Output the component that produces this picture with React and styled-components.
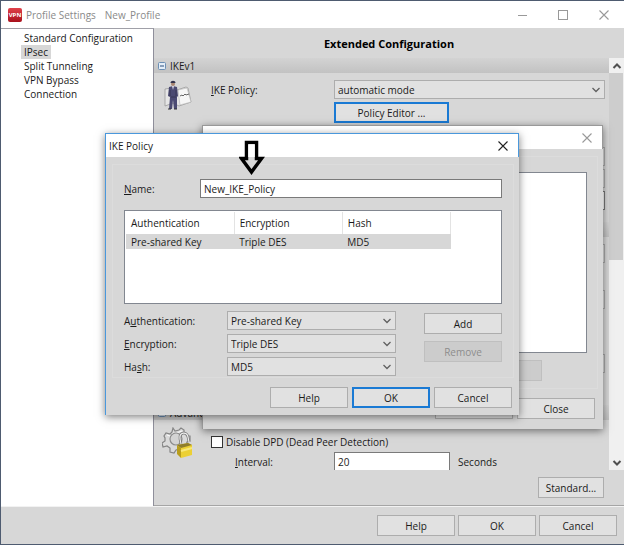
import React, { useState } from 'react'
import styled, { createGlobalStyle } from 'styled-components'

const GlobalStyle = createGlobalStyle`
  * {
    box-sizing: border-box;
  }
  body {
    margin: 0;
    background: #d7d7d7;
    color: #1a1a1a;
  }
  body, button, input, select {
    font-family: 'Open Sans', 'Noto Sans', sans-serif;
    font-size: 10px;
    font-weight: 500;
    line-height: 14px;
  }
`

const Window = styled.div`
  position: relative;
  display: flex;
  flex-direction: column;
  min-height: 100vh;
  border: 1px solid #4e5b70;
  border-right: 0;
  overflow: hidden;
`

const TitleBar = styled.header`
  display: flex;
  align-items: center;
  height: 27px;
  padding-left: 7px;
  background: #fff;
  color: #8a8a8a;
  font-weight: 400;
`

const Logo = styled.span`
  width: 14px;
  height: 14px;
  margin-right: 4px;
  border-radius: 2px;
  background: linear-gradient(#e0414a, #a8101c);
  color: #fff;
  font-size: 6px;
  font-weight: 700;
  text-align: center;
`

const ProfileName = styled.span`
  flex: 1;
  margin-left: 9px;
`

const WindowButton = styled.button`
  display: flex;
  align-items: center;
  justify-content: center;
  width: ${(p) => p.$width || 41}px;
  height: 23px;
  padding: 0;
  border: 0;
  background: none;
  color: ${(p) => p.$color || '#999'};
`

const Body = styled.div`
  display: flex;
  flex: 1;
`

const Nav = styled.nav`
  width: 153px;
  padding: 2px 0 0 20px;
  border-top: 1px solid #a0a0a8;
  border-right: 1px solid #8f8f9b;
  background: #fff;
`

const NavItem = styled.button`
  display: block;
  height: 14px;
  padding: 0 3px;
  border: 0;
  background: ${(p) => (p.$active ? '#d7d7d7' : 'none')};
  color: inherit;
`

const Main = styled.main`
  display: flex;
  flex: 1;
  flex-direction: column;
  border-bottom: 1px solid #a5a5a5;
`

const Heading = styled.h1`
  height: 30px;
  margin: 0;
  font-size: 11px;
  font-weight: 700;
  line-height: 32px;
  text-align: center;
  color: #000;
`

const ScrollArea = styled.div`
  display: flex;
  flex: 1 1 0;
  min-height: 0;
  overflow: hidden;
`

const Sections = styled.div`
  flex: 1;
  height: 412px;
  overflow: hidden;
`

const SectionHeader = styled.h2`
  display: flex;
  align-items: center;
  gap: 4px;
  height: 15px;
  margin: 0;
  padding-left: 4px;
  background: linear-gradient(#d3d3d3, #c2c2c2);
  font-size: 10px;
  font-weight: 500;
`

const SectionBody = styled.div`
  display: flex;
  padding: 7px 4px ${(p) => p.$bottom || 0}px 8px;
`

const IconColumn = styled.div`
  width: 49px;
`

const Fields = styled.div`
  display: flex;
  flex: 1;
  flex-direction: column;
  gap: 3px;
`

const FieldRow = styled.div`
  display: flex;
  align-items: center;
  margin-top: ${(p) => p.$space || 0}px;
`

const FieldLabel = styled.label`
  width: ${(p) => p.$width || 123}px;
  padding-left: ${(p) => p.$indent || 0}px;
`

const SelectBox = styled.div`
  display: grid;
  flex: 1;
  align-items: center;

  select,
  svg {
    grid-area: 1 / 1;
  }
  svg {
    justify-self: end;
    margin-right: 4px;
    pointer-events: none;
  }
`

const StyledSelect = styled.select`
  width: 100%;
  height: 19px;
  padding: 0 20px 0 3px;
  border: 1px solid #adadad;
  border-radius: 0;
  background: #e1e1e1;
  color: inherit;
  appearance: none;
`

const TextInput = styled.input`
  flex: ${(p) => (p.$width ? 'none' : 1)};
  width: ${(p) => (p.$width ? `${p.$width}px` : 'auto')};
  min-width: 0;
  height: 19px;
  padding: 0 3px;
  border: 1px solid #7a7a7a;
  background: #fff;
  color: inherit;
`

const Button = styled.button`
  width: ${(p) => p.$width || 78}px;
  height: 21px;
  padding: 0;
  border: ${(p) => (p.$primary ? '2px solid #1a7ad4' : '1px solid #adadad')};
  background: #e1e1e1;
  color: inherit;

  &:disabled {
    border-color: #bfbfbf;
    background: #cccccc;
    color: #8c8c8c;
  }
`

const CheckLabel = styled.label`
  display: flex;
  align-items: center;
  gap: 3px;
  height: 14px;
  margin-top: 8px;
`

const CheckBox = styled.input`
  width: 12px;
  height: 12px;
  margin: 0;
  border: 1px solid #333;
  background: #fff;
  appearance: none;

  &:checked {
    background: #1a7ad4;
  }
`

const Unit = styled.span`
  margin-left: 8px;
`

const ScrollBar = styled.div`
  display: flex;
  flex-direction: column;
  width: 15px;
  background: #f0f0f0;
`

const ScrollButton = styled.button`
  display: flex;
  align-items: center;
  justify-content: center;
  height: 15px;
  padding: 0;
  border: 0;
  background: none;
  color: #505050;
`

const ScrollTrack = styled.div`
  flex: 1;
`

const ScrollThumb = styled.div`
  height: 49%;
  margin-right: 1px;
  background: #cdcdcd;
`

const StandardRow = styled.div`
  display: flex;
  justify-content: flex-end;
  padding: 7px 20px 7px 0;
`

const Footer = styled.footer`
  display: flex;
  justify-content: flex-end;
  gap: 3px;
  padding: 8px 7px 8px 0;
  border-top: 1px solid #f2f2f2;
`

const Dialog = styled.section`
  position: absolute;
  top: ${(p) => p.$top}px;
  left: ${(p) => p.$left}px;
  display: flex;
  flex-direction: column;
  width: ${(p) => p.$width}px;
  background: #d7d7d7;
  border-left: 1px solid ${(p) => p.$accent};
  box-shadow: 0 2px 8px rgba(0, 0, 0, 0.5);
`

const DialogTitle = styled.header`
  display: flex;
  align-items: center;
  justify-content: space-between;
  height: 24px;
  padding-left: 3px;
  border: solid ${(p) => p.$accent};
  border-width: 1px 1px 0 0;
  background: #fff;
  color: ${(p) => p.$color};
  font-weight: 400;
`

const DialogGroup = styled.div`
  display: flex;
  flex-direction: column;
  margin: 7px 5px 0 6px;
  padding: ${(p) => p.$padding};
  border: 1px solid #dcdcdc;
`

const DialogFooter = styled.footer`
  display: flex;
  justify-content: flex-end;
  gap: 4px;
  padding: 9px ${(p) => p.$right}px ${(p) => p.$bottom}px 0;
`

const ListPanel = styled.div`
  height: ${(p) => p.$height}px;
  margin-bottom: 7px;
  padding: 1px;
  border: 1px solid #828790;
  background: #fff;
`

const PolicyTable = styled.table`
  width: 325px;
  border-collapse: collapse;
  table-layout: fixed;

  th,
  td {
    padding: 0 0 0 5px;
    font-weight: 500;
    text-align: left;
  }
  th {
    height: 22px;
    border-right: 1px solid #e3e3e3;
  }
  td {
    height: 15px;
    background: #d7d7d7;
  }
`

const DialogFields = styled.div`
  display: flex;
  justify-content: space-between;
`

const DialogSelects = styled.div`
  display: flex;
  flex-direction: column;
  gap: 4px;
  width: 272px;
`

const DialogActions = styled.div`
  display: flex;
  flex-direction: column;
  gap: 7px;
  padding-top: 2px;
`

const Arrow = styled.svg`
  position: absolute;
  top: 139px;
  left: 238px;
`

const Chevron = ({ up, bold }) => (
  <svg width="10" height="6" viewBox="0 0 10 6" fill="none">
    <path
      d={up ? 'M1.5 5 5 1.5 8.5 5' : 'M1.5 1 5 4.500 8.500 1'}
      stroke={bold ? '#505050' : '#606060'}
      strokeWidth={bold ? 2 : 1.3}
    />
  </svg>
)

const CloseIcon = () => (
  <svg width="10" height="10" viewBox="0 0 10 10">
    <path d="M.5.5l9 9M9.5.5l-9 9" stroke="currentColor" strokeWidth="1.1" />
  </svg>
)

const CollapseIcon = () => (
  <svg width="8" height="8" viewBox="0 0 8 8">
    <rect x=".5" y=".5" width="7" height="7" rx="1" fill="#e4eef8" stroke="#6c8fb4" />
    <path d="M2 4h4" stroke="#2c4f7c" />
  </svg>
)

const PolicyIcon = () => (
  <svg width="32" height="32" viewBox="0 0 32 32">
    <path d="M3 9l7-1 5 2 9-3 2 1 3 14-12 4-6-3-8 3z" fill="#e6e6e6" stroke="#9a9a9a" strokeWidth=".8" />
    <path d="M16 10l9-2 4 14-11 3z" fill="#f6f6f6" stroke="#b5b5b5" strokeWidth=".6" />
    <path d="M18 16l2-1 1 1 2-2 1 1 3-1" fill="none" stroke="#666" strokeWidth="1" />
    <path d="M7 7l4-1 4 1 1 9-1 1v12h-3l-1-9-1 9H7l1-12-2-1z" fill="#4b4a72" />
    <path d="M10 6l1 4 1-4z" fill="#dde" />
    <path d="M8 10v6M14 10v6M9 17h5" stroke="#33324f" strokeWidth=".8" />
    <circle cx="11" cy="4" r="2" fill="#a98672" />
    <path d="M8.500 3c0-3 5-3 5 0z" fill="#33334c" />
    <path d="M6 29h3M12 29h3" stroke="#333" strokeWidth="1.200" />
  </svg>
)

const AdvancedIcon = () => (
  <svg width="32" height="32" viewBox="0 0 32 32">
    <path
      d="M11 1l2 3 4-1 2-2 3 2v3l3 3h3v5l-3 1-1 4 1 3-4 2-3-2-4 1-2 3-4-1v-4l-3-2-4 1-1-4 3-2v-3L2 9l2-3 4 1 2-2z"
      fill="#dadada"
      stroke="#858585"
      strokeWidth="1.200"
    />
    <path d="M5 8l3 1 3-3 2 1 4-2 3-1" fill="none" stroke="#fafafa" strokeWidth="1" />
    <circle cx="14" cy="12" r="6" fill="#d4d4d4" stroke="#8d8d8d" strokeWidth="1.200" />
    <path d="M19 17l-1-5c-1-7 7-8 8-2l1 5" fill="none" stroke="#777" strokeWidth="2.600" />
    <path d="M19 17l-1-5c-1-7 7-8 8-2l1 5" fill="none" stroke="#eee" strokeWidth="1.200" />
    <path d="M15 18l4 3v10l-4-4z" fill="#b89d1c" />
    <path d="M15 18l11-2 4 2v10l-11 3v-10z" fill="#ecd034" />
    <path d="M15 18l11-2 4 2-11 3z" fill="#8f7d2c" />
    <path d="M19 24l11-3" stroke="#f8e87a" strokeWidth="2" />
  </svg>
)

const Select = ({ options, ...props }) => (
  <SelectBox>
    <StyledSelect {...props}>
      {options.map((option) => (
        <option key={option}>{option}</option>
      ))}
    </StyledSelect>
    <Chevron />
  </SelectBox>
)

const navItems = [
  'Standard Configuration',
  'IPsec',
  'Split Tunneling',
  'VPN Bypass',
  'Connection',
]

const ExtendedConfiguration = () => (
  <Main>
    <Heading>Extended Configuration</Heading>
    <ScrollArea>
      <Sections>
        <SectionHeader>
          <CollapseIcon />
          IKEv1
        </SectionHeader>
        <SectionBody $bottom={12}>
          <IconColumn>
            <PolicyIcon />
          </IconColumn>
          <Fields>
            <FieldRow>
              <FieldLabel htmlFor="ikePolicy">
                <u>I</u>KE Policy:
              </FieldLabel>
              <Select id="ikePolicy" options={['automatic mode']} />
            </FieldRow>
            <FieldRow>
              <FieldLabel as="span" />
              <Button $primary $width={115}>
                Policy Editor ...
              </Button>
            </FieldRow>
            <FieldRow $space={21}>
              <Select aria-label="Exchange mode" options={[]} />
            </FieldRow>
            <FieldRow>
              <Select aria-label="PFS group" options={[]} />
            </FieldRow>
            <FieldRow>
              <TextInput aria-label="Policy lifetime" />
            </FieldRow>
          </Fields>
        </SectionBody>
        <SectionHeader />
        <SectionBody $bottom={32}>
          <IconColumn />
          <Fields>
            <FieldRow>
              <Select aria-label="IKEv2 policy" options={[]} />
            </FieldRow>
            <FieldRow $space={24}>
              <Select aria-label="IKEv2 authentication" options={[]} />
            </FieldRow>
            <FieldRow $space={42}>
              <Select aria-label="IPsec policy" options={[]} />
            </FieldRow>
          </Fields>
        </SectionBody>
        <SectionHeader>
          <CollapseIcon />
          Advanced
        </SectionHeader>
        <SectionBody>
          <IconColumn>
            <AdvancedIcon />
          </IconColumn>
          <Fields>
            <CheckLabel>
              <CheckBox type="checkbox" />
              Disable DPD (Dead Peer Detection)
            </CheckLabel>
            <FieldRow>
              <FieldLabel htmlFor="interval" $indent={24}>
                <u>I</u>nterval:
              </FieldLabel>
              <TextInput id="interval" $width={116} defaultValue="20" />
              <Unit>Seconds</Unit>
            </FieldRow>
          </Fields>
        </SectionBody>
      </Sections>
      <ScrollBar>
        <ScrollButton aria-label="Scroll up">
          <Chevron up bold />
        </ScrollButton>
        <ScrollTrack>
          <ScrollThumb />
        </ScrollTrack>
        <ScrollButton aria-label="Scroll down">
          <Chevron bold />
        </ScrollButton>
      </ScrollBar>
    </ScrollArea>
    <StandardRow>
      <Button $width={66}>Standard...</Button>
    </StandardRow>
  </Main>
)

const IPsecDialog = () => (
  <Dialog $top={124} $left={201} $width={401} $accent="#999">
    <DialogTitle $accent="#999" $color="#999">
      IPsec Configuration
      <WindowButton $width={30} aria-label="Close IPsec Configuration">
        <CloseIcon />
      </WindowButton>
    </DialogTitle>
    <DialogGroup $padding="15px 10px 7px">
      <ListPanel $height={181} />
      <FieldRow>
        <Button disabled $width={322} aria-label="Remove policy" />
      </FieldRow>
    </DialogGroup>
    <DialogFooter $right={8} $bottom={10}>
      <Button aria-label="Help" />
      <Button>Close</Button>
    </DialogFooter>
  </Dialog>
)

const PolicyDialog = () => {
  const [name, setName] = useState('New_IKE_Policy')

  return (
    <Dialog $top={132} $left={104} $width={414} $accent="#4a98dc">
      <DialogTitle $accent="#4a98dc" $color="#1a1a1a">
        IKE Policy
        <WindowButton $width={30} $color="#222" aria-label="Close IKE Policy">
          <CloseIcon />
        </WindowButton>
      </DialogTitle>
      <DialogGroup $padding="14px 11px 1px 11px">
        <FieldRow>
          <FieldLabel htmlFor="name" $width={76}>
            <u>N</u>ame:
          </FieldLabel>
          <TextInput
            id="name"
            value={name}
            onChange={(e) => setName(e.target.value)}
          />
        </FieldRow>
        <FieldRow $space={12} />
        <ListPanel $height={94}>
          <PolicyTable>
            <thead>
              <tr>
                <th>Authentication</th>
                <th>Encryption</th>
                <th>Hash</th>
              </tr>
            </thead>
            <tbody>
              <tr>
                <td>Pre-shared Key</td>
                <td>Triple DES</td>
                <td>MD5</td>
              </tr>
            </tbody>
          </PolicyTable>
        </ListPanel>
        <DialogFields>
          <DialogSelects>
            <FieldRow>
              <FieldLabel htmlFor="authentication" $width={103}>
                A<u>u</u>thentication:
              </FieldLabel>
              <Select id="authentication" options={['Pre-shared Key']} />
            </FieldRow>
            <FieldRow>
              <FieldLabel htmlFor="encryption" $width={103}>
                <u>E</u>ncryption:
              </FieldLabel>
              <Select id="encryption" options={['Triple DES']} />
            </FieldRow>
            <FieldRow>
              <FieldLabel htmlFor="hash" $width={103}>
                Ha<u>s</u>h:
              </FieldLabel>
              <Select id="hash" options={['MD5']} />
            </FieldRow>
          </DialogSelects>
          <DialogActions>
            <Button>Add</Button>
            <Button disabled>Remove</Button>
          </DialogActions>
        </DialogFields>
      </DialogGroup>
      <DialogFooter $right={7} $bottom={7}>
        <Button>Help</Button>
        <Button $primary>OK</Button>
        <Button>Cancel</Button>
      </DialogFooter>
    </Dialog>
  )
}

const App = () => {
  const [active, setActive] = useState('IPsec')

  return (
    <>
      <GlobalStyle />
      <Window>
        <TitleBar>
          <Logo>VPN</Logo>
          Profile Settings
          <ProfileName>New_Profile</ProfileName>
          <WindowButton aria-label="Minimize">
            <svg width="10" height="10" viewBox="0 0 10 10">
              <path d="M1 5.500h9" stroke="currentColor" />
            </svg>
          </WindowButton>
          <WindowButton aria-label="Maximize">
            <svg width="10" height="10" viewBox="0 0 10 10">
              <rect x=".5" y=".5" width="9" height="9" fill="none" stroke="currentColor" />
            </svg>
          </WindowButton>
          <WindowButton aria-label="Close">
            <CloseIcon />
          </WindowButton>
        </TitleBar>
        <Body>
          <Nav>
            {navItems.map((item) => (
              <NavItem
                key={item}
                $active={item === active}
                onClick={() => setActive(item)}
              >
                {item}
              </NavItem>
            ))}
          </Nav>
          <ExtendedConfiguration />
        </Body>
        <Footer>
          <Button>Help</Button>
          <Button>OK</Button>
          <Button>Cancel</Button>
        </Footer>
        <IPsecDialog />
        <PolicyDialog />
        <Arrow width="26" height="36" viewBox="0 0 26 36">
          <path
            d="M7.500 2.500h10v16h5L12.500 32 2.500 18.500h5z"
            fill="#d7d7d7"
            stroke="#000"
            strokeWidth="3.500"
          />
          <path d="M9.200 4.200h6.600v12.800H9.200z" fill="#fff" />
        </Arrow>
      </Window>
    </>
  )
}

export default App
